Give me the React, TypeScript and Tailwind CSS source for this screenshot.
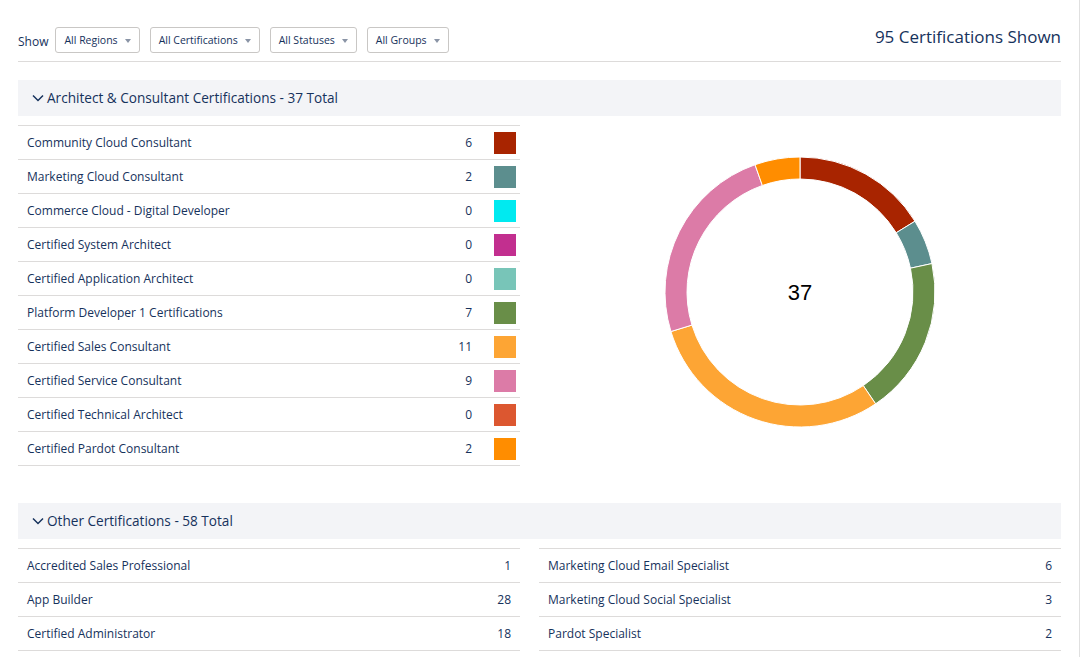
import React from "react";

const FONT = { fontFamily: '"Open Sans", "Noto Sans", Arial, sans-serif' };

const ARCHITECT = [
	{ name: "Community Cloud Consultant", count: 6, color: "#a82400" },
	{ name: "Marketing Cloud Consultant", count: 2, color: "#5c8e8e" },
	{ name: "Commerce Cloud - Digital Developer", count: 0, color: "#00eaf0" },
	{ name: "Certified System Architect", count: 0, color: "#c22f8f" },
	{ name: "Certified Application Architect", count: 0, color: "#78c5b8" },
	{ name: "Platform Developer 1 Certifications", count: 7, color: "#698e48" },
	{ name: "Certified Sales Consultant", count: 11, color: "#fda534" },
	{ name: "Certified Service Consultant", count: 9, color: "#dc7ba7" },
	{ name: "Certified Technical Architect", count: 0, color: "#dc5730" },
	{ name: "Certified Pardot Consultant", count: 2, color: "#ff8d00" },
];

const OTHER_LEFT = [
	{ name: "Accredited Sales Professional", count: 1 },
	{ name: "App Builder", count: 28 },
	{ name: "Certified Administrator", count: 18 },
];

const OTHER_RIGHT = [
	{ name: "Marketing Cloud Email Specialist", count: 6 },
	{ name: "Marketing Cloud Social Specialist", count: 3 },
	{ name: "Pardot Specialist", count: 2 },
];

const FILTERS = ["All Regions", "All Certifications", "All Statuses", "All Groups"];

function Caret() {
	return (
		<svg width="6" height="4" viewBox="0 0 6 4" className="ml-[7px]">
			<path d="M0 0 L6 0 L3 4 Z" fill="#8a94a6" />
		</svg>
	);
}

function Chevron() {
	return (
		<svg width="12" height="8" viewBox="0 0 12 8" className="mr-[3px]">
			<path d="M1 1.5 L6 6.5 L11 1.5" fill="none" stroke="#16325c" strokeWidth="1.5" />
		</svg>
	);
}

function SectionHeader({ title }: { title: string }) {
	return (
		<div className="h-9 bg-[#f3f4f7] flex items-center pl-[14px] text-[13.6px] text-[#16325c]">
			<Chevron />
			{title}
		</div>
	);
}

function polar(cx: number, cy: number, r: number, a: number) {
	return [cx + r * Math.sin(a), cy - r * Math.cos(a)];
}

function Donut() {
	const total = ARCHITECT.reduce((s, d) => s + d.count, 0);
	const cx = 140;
	const cy = 140;
	const ro = 135;
	const ri = 113;
	let start = 0;
	const segs = ARCHITECT.filter(d => d.count > 0).map(d => {
		const sweep = (d.count / total) * Math.PI * 2;
		const a0 = start;
		const a1 = start + sweep;
		start = a1;
		const large = sweep > Math.PI ? 1 : 0;
		const [x0, y0] = polar(cx, cy, ro, a0);
		const [x1, y1] = polar(cx, cy, ro, a1);
		const [x2, y2] = polar(cx, cy, ri, a1);
		const [x3, y3] = polar(cx, cy, ri, a0);
		const path = `M${x0} ${y0} A${ro} ${ro} 0 ${large} 1 ${x1} ${y1} L${x2} ${y2} A${ri} ${ri} 0 ${large} 0 ${x3} ${y3} Z`;
		return <path key={d.name} d={path} fill={d.color} stroke="#fff" strokeWidth="1" />;
	});
	return (
		<svg width="280" height="280" viewBox="0 0 280 280">
			{segs}
			<text x={cx} y={cy + 8} textAnchor="middle" fontSize="22" fill="#000" style={{ fontFamily: '"Liberation Sans", Arial, sans-serif' }}>
				{total}
			</text>
		</svg>
	);
}

function Row({ name, count, color, countPad }: { name: string; count: number; color?: string; countPad?: string }) {
	return (
		<div className="h-[34px] border-b border-[#dddbda] flex items-center pl-[9px] text-[12px] text-[#16325c]">
			<span className="flex-1 mt-[1px]">{name}</span>
			<span className={countPad ?? "pr-[9px]"}>{count}</span>
			{color && <span className="w-[22px] h-[22px] ml-[22px] mr-[4px]" style={{ backgroundColor: color }} />}
		</div>
	);
}

export default function App() {
	return (
		<div className="w-[1080px] h-[657px] overflow-hidden bg-white border-r border-[#e0e0e0]" style={FONT}>
			<div className="px-[18px] pt-[27px]">
				<div className="flex items-center justify-between pb-[8px] border-b border-[#dddbda]">
					<div className="flex items-center">
						<span className="text-[12px] text-[#16325c] mr-[7px] mt-[3px]">Show</span>
						<div className="flex gap-[10px]">
							{FILTERS.map(f => (
								<div
									key={f}
									className="h-[26px] pl-[8px] pr-[8px] pt-[1px] border border-[#c9c7c5] rounded-[3px] flex items-center text-[10.5px] text-[#16325c]"
								>
									{f}
									<Caret />
								</div>
							))}
						</div>
					</div>
					<div className="text-[17px] text-[#16325c] -mt-[6px]">95 Certifications Shown</div>
				</div>

				<div className="mt-[18px]">
					<SectionHeader title="Architect & Consultant Certifications - 37 Total" />
					<div className="flex mt-[9px]">
						<div className="w-[502px] border-t border-[#dddbda]">
							{ARCHITECT.map(d => (
								<Row key={d.name} name={d.name} count={d.count} color={d.color} countPad="pr-0" />
							))}
						</div>
						<div className="flex-1 flex justify-center pt-[27px] pl-[18px]">
							<Donut />
						</div>
					</div>
				</div>

				<div className="mt-[37px]">
					<SectionHeader title="Other Certifications - 58 Total" />
					<div className="flex gap-[19px] mt-[9px]">
						<div className="w-[502px] border-t border-[#dddbda]">
							{OTHER_LEFT.map(d => (
								<Row key={d.name} name={d.name} count={d.count} />
							))}
						</div>
						<div className="flex-1 border-t border-[#dddbda]">
							{OTHER_RIGHT.map(d => (
								<Row key={d.name} name={d.name} count={d.count} />
							))}
						</div>
					</div>
				</div>
			</div>
		</div>
	);
}
